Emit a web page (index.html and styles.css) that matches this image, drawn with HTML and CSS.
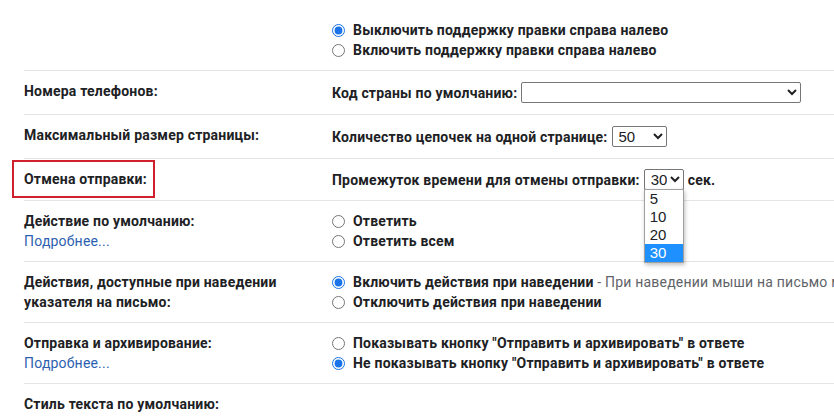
FILE: index.html
```html
<!DOCTYPE html>
<html lang="ru">
<head>
    <meta charset="UTF-8">
    <meta name="viewport" content="width=device-width, initial-scale=1.0">
    <title>Настройки - Общие</title>
    <link rel="stylesheet" href="styles.css">
</head>
<body>
    <div class="settings">
        <div class="row row-first">
            <div class="label"></div>
            <div class="value">
                <label class="option"><input type="radio" name="rtl" checked> Выключить поддержку правки справа налево</label>
                <label class="option"><input type="radio" name="rtl"> Включить поддержку правки справа налево</label>
            </div>
        </div>

        <div class="row">
            <div class="label">Номера телефонов:</div>
            <div class="value inline">
                Код страны по умолчанию:
                <select class="field-select country"><option></option></select>
            </div>
        </div>

        <div class="row">
            <div class="label">Максимальный размер страницы:</div>
            <div class="value inline">
                Количество цепочек на одной странице:
                <select class="field-select per-page"><option>50</option></select>
            </div>
        </div>

        <div class="row row-undo">
            <div class="label">Отмена отправки:</div>
            <div class="highlight"></div>
            <div class="value inline">
                Промежуток времени для отмены отправки:
                <span class="select-wrap">
                    <select class="field-select undo"><option>30</option></select>
                    <ul class="dropdown">
                        <li>5</li>
                        <li>10</li>
                        <li>20</li>
                        <li class="selected">30</li>
                    </ul>
                </span>
                сек.
            </div>
        </div>

        <div class="row">
            <div class="label">
                Действие по умолчанию:
                <a href="#" class="more">Подробнее...</a>
            </div>
            <div class="value">
                <label class="option"><input type="radio" name="reply"> Ответить</label>
                <label class="option"><input type="radio" name="reply"> Ответить всем</label>
            </div>
        </div>

        <div class="row">
            <div class="label">Действия, доступные при наведении указателя на письмо:</div>
            <div class="value">
                <label class="option"><input type="radio" name="hover" checked> Включить действия при наведении<span class="hint">&nbsp;- При наведении мыши на письмо можно быстро архивировать его, удалять, отмечать как прочитанное</span></label>
                <label class="option"><input type="radio" name="hover"> Отключить действия при наведении</label>
            </div>
        </div>

        <div class="row">
            <div class="label">
                Отправка и архивирование:
                <a href="#" class="more">Подробнее...</a>
            </div>
            <div class="value">
                <label class="option"><input type="radio" name="archive"> Показывать кнопку "Отправить и архивировать" в ответе</label>
                <label class="option"><input type="radio" name="archive" checked> Не показывать кнопку "Отправить и архивировать" в ответе</label>
            </div>
        </div>

        <div class="row row-last">
            <div class="label">Стиль текста по умолчанию:</div>
            <div class="value">
                <div class="editor-top"></div>
            </div>
        </div>
    </div>
</body>
</html>
```

FILE: styles.css
```css
* {
    margin: 0;
    padding: 0;
    box-sizing: border-box;
}

body {
    font-family: Roboto, "Noto Sans", Arial, sans-serif;
    font-size: 14px;
    line-height: 20px;
    letter-spacing: 0.2px;
    color: #202124;
    background-color: #fff;
    overflow: hidden;
}

.settings {
    margin-left: 24px;
    padding-top: 10px;
}

.row {
    display: flex;
    position: relative;
    padding: 10px 0;
    border-bottom: 1px solid #e4e4e4;
}

.row-last {
    border-bottom: none;
}

.label {
    width: 308px;
    flex-shrink: 0;
    font-weight: 700;
    padding-right: 40px;
}

.more {
    display: block;
    font-weight: 400;
    color: #2d5fb0;
    text-decoration: none;
}

.value {
    flex: 1;
    font-weight: 700;
    white-space: nowrap;
    overflow: hidden;
}

.value.inline {
    display: flex;
    align-items: center;
    gap: 4px;
    overflow: visible;
}

.option {
    display: flex;
    align-items: center;
    height: 20px;
}

.option input {
    width: 13px;
    height: 13px;
    margin: 0 8px 0 0;
    accent-color: #1a73e8;
}

.hint {
    font-weight: 400;
    color: #5f6368;
}

.field-select {
    height: 21px;
    margin: 1px 0;
    font-family: "Liberation Sans", Arial, sans-serif;
    font-size: 15px;
    letter-spacing: 0;
    color: #202124;
    border: 1px solid #767676;
    border-radius: 2px;
    background-color: #fff;
    padding-left: 2px;
}

.country {
    width: 280px;
}

.per-page {
    width: 55px;
}

.undo {
    width: 40px;
    margin: 0;
}

.select-wrap {
    position: relative;
    display: inline-flex;
}

.dropdown {
    position: absolute;
    top: 20px;
    left: 0;
    width: 40px;
    list-style: none;
    background-color: #fff;
    border: 1px solid #a0a0a0;
    box-shadow: 1px 2px 4px rgba(0, 0, 0, 0.25);
    font-family: "Liberation Sans", Arial, sans-serif;
    font-size: 15px;
    font-weight: 400;
    letter-spacing: 0;
    z-index: 10;
}

.dropdown li {
    height: 18px;
    line-height: 18px;
    padding-left: 5px;
}

.dropdown li.selected {
    background-color: #1e90ff;
    color: #fff;
}

.highlight {
    position: absolute;
    top: 1px;
    left: -12px;
    width: 143px;
    height: 38px;
    border: 2px solid #d0202e;
}

.editor-top {
    width: 410px;
    height: 6px;
    margin-top: -6px;
    margin-left: -2px;
    background: linear-gradient(#ebebeb, #fff);
}
```
